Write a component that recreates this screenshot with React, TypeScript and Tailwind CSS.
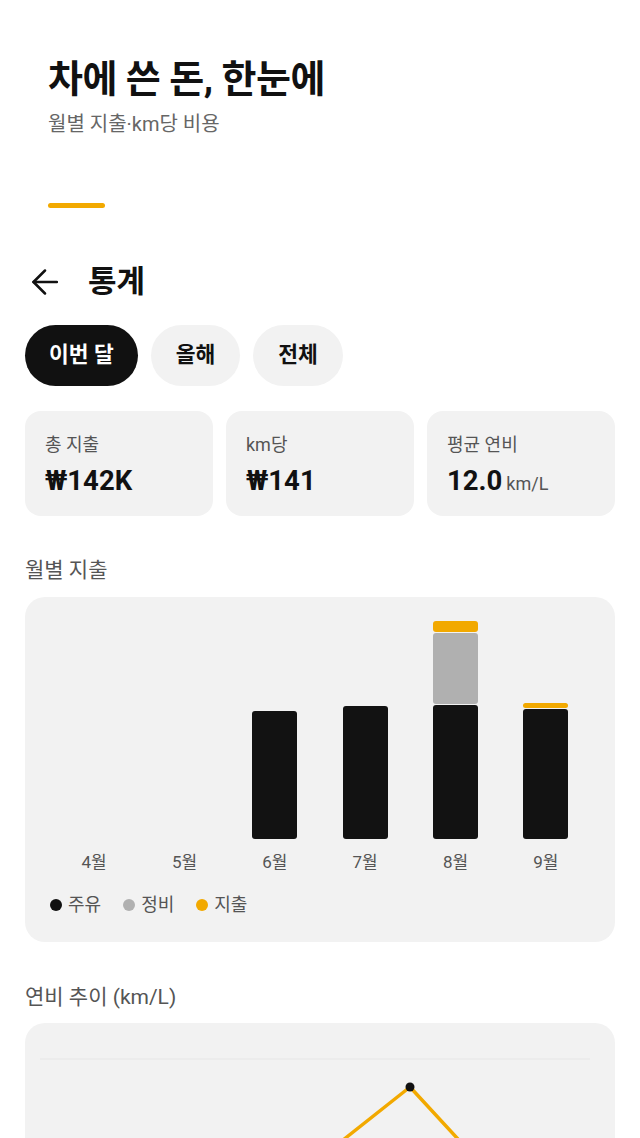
import React from 'react';

type Month = {
  label: string;
  fuel: number;
  repair: number;
  etc: number;
};

// heights are in px of the bar area
const months: Month[] = [
  { label: '4월', fuel: 0, repair: 0, etc: 0 },
  { label: '5월', fuel: 0, repair: 0, etc: 0 },
  { label: '6월', fuel: 128, repair: 0, etc: 0 },
  { label: '7월', fuel: 133, repair: 0, etc: 0 },
  { label: '8월', fuel: 134, repair: 71, etc: 11 },
  { label: '9월', fuel: 130, repair: 0, etc: 5 },
];

const stats = [
  { label: '총 지출', value: '₩142K' },
  { label: 'km당', value: '₩141' },
  { label: '평균 연비', value: '12.0', unit: 'km/L' },
];

const tabs = ['이번 달', '올해', '전체'];

function Bar({ m }: { m: Month }) {
  return (
    <div className="flex flex-col items-center justify-end h-full">
      <div className="flex flex-col gap-px w-[45px]">
        {m.etc > 0 && <div className="bg-[#f2a900] rounded-[3px]" style={{ height: m.etc }} />}
        {m.repair > 0 && <div className="bg-[#b0b0b0] rounded-[3px]" style={{ height: m.repair }} />}
        {m.fuel > 0 && <div className="bg-[#121212] rounded-[3px]" style={{ height: m.fuel }} />}
      </div>
    </div>
  );
}

export default function App() {
  return (
    <div className="w-[640px] bg-white text-[#111] font-['Roboto','Noto_Sans_CJK_KR',sans-serif] pb-10">
      <div className="px-12 pt-[57px]">
        <h1 className="text-[38px] leading-[45px] font-bold tracking-[-0.5px]">차에 쓴 돈, 한눈에</h1>
        <p className="mt-[8px] text-[20px] leading-[28px] text-[#666]">월별 지출·km당 비용</p>
        <div className="mt-[65px] h-[5px] w-[57px] rounded-full bg-[#f2a900]" />
      </div>

      <div className="mt-[54px] flex items-center h-[40px] pl-[32px]">
        <svg width="26" height="26" viewBox="0 0 26 26" fill="none" stroke="#111" strokeWidth="2.5" strokeLinecap="round" strokeLinejoin="round">
          <path d="M13 1.5 L1.5 13 L13 24.5" />
          <path d="M1.5 13 H25" />
        </svg>
        <h2 className="ml-[30px] text-[31px] font-bold">통계</h2>
      </div>

      <div className="mt-[23px] px-[25px] flex gap-[13px]">
        {tabs.map((t, i) => (
          <button
            key={t}
            className={
              i === 0
                ? 'h-[61px] px-6 rounded-full bg-[#111] text-white text-[21.5px] font-semibold'
                : 'h-[61px] px-[25px] rounded-full bg-[#f2f2f2] text-[#111] text-[21.5px] font-semibold'
            }
          >
            {t}
          </button>
        ))}
      </div>

      <div className="mt-[25px] px-[25px] grid grid-cols-3 gap-[13px]">
        {stats.map((s) => (
          <div key={s.label} className="h-[105px] rounded-2xl bg-[#f2f2f2] px-5 pt-[21px]">
            <div className="text-[18px] leading-[26px] text-[#555]">{s.label}</div>
            <div className="mt-[6px] flex items-baseline gap-1">
              <span className="text-[27.5px] leading-[34px] font-bold">{s.value}</span>
              {s.unit && <span className="text-[18px] text-[#555]">{s.unit}</span>}
            </div>
          </div>
        ))}
      </div>

      <div className="mt-[40px] px-[25px] text-[21px] leading-[28px] text-[#555]">월별 지출</div>

      <div className="mx-[25px] mt-[13px] rounded-[20px] bg-[#f2f2f2] pt-[12px] pb-[25px]">
        <div className="px-6 grid grid-cols-6 h-[230px]">
          {months.map((m) => (
            <Bar key={m.label} m={m} />
          ))}
        </div>
        <div className="px-6 mt-[11px] grid grid-cols-6">
          {months.map((m) => (
            <div key={m.label} className="text-center text-[17px] leading-[24px] text-[#555]">
              {m.label}
            </div>
          ))}
        </div>
        <div className="mt-[19px] pl-[25px] flex items-center gap-[22px] text-[18px] leading-[24px] text-[#555]">
          <div className="flex items-center gap-[6px]">
            <span className="w-3 h-3 rounded-full bg-[#111]" />
            주유
          </div>
          <div className="flex items-center gap-[6px]">
            <span className="w-3 h-3 rounded-full bg-[#b0b0b0]" />
            정비
          </div>
          <div className="flex items-center gap-[6px]">
            <span className="w-3 h-3 rounded-full bg-[#f2a900]" />
            지출
          </div>
        </div>
      </div>

      <div className="mt-[41px] px-[25px] text-[21px] leading-[28px] text-[#555]">연비 추이 (km/L)</div>

      <div className="mx-[25px] mt-[12px] rounded-[20px] bg-[#f2f2f2] h-[300px]">
        <svg width="590" height="300" viewBox="0 0 590 300" fill="none">
          <line x1="15" y1="36" x2="565" y2="36" stroke="#e6e6e6" strokeWidth="1" />
          <line x1="15" y1="136" x2="565" y2="136" stroke="#e6e6e6" strokeWidth="1" />
          <line x1="15" y1="236" x2="565" y2="236" stroke="#e6e6e6" strokeWidth="1" />
          <polyline
            points="20,250 203,208 385,64 550,243"
            stroke="#f2a900"
            strokeWidth="3.5"
            strokeLinejoin="round"
            strokeLinecap="round"
          />
          <circle cx="20" cy="250" r="4.5" fill="#111" />
          <circle cx="203" cy="208" r="4.5" fill="#111" />
          <circle cx="385" cy="64" r="4.5" fill="#111" />
          <circle cx="550" cy="243" r="4.5" fill="#111" />
        </svg>
      </div>
    </div>
  );
}
